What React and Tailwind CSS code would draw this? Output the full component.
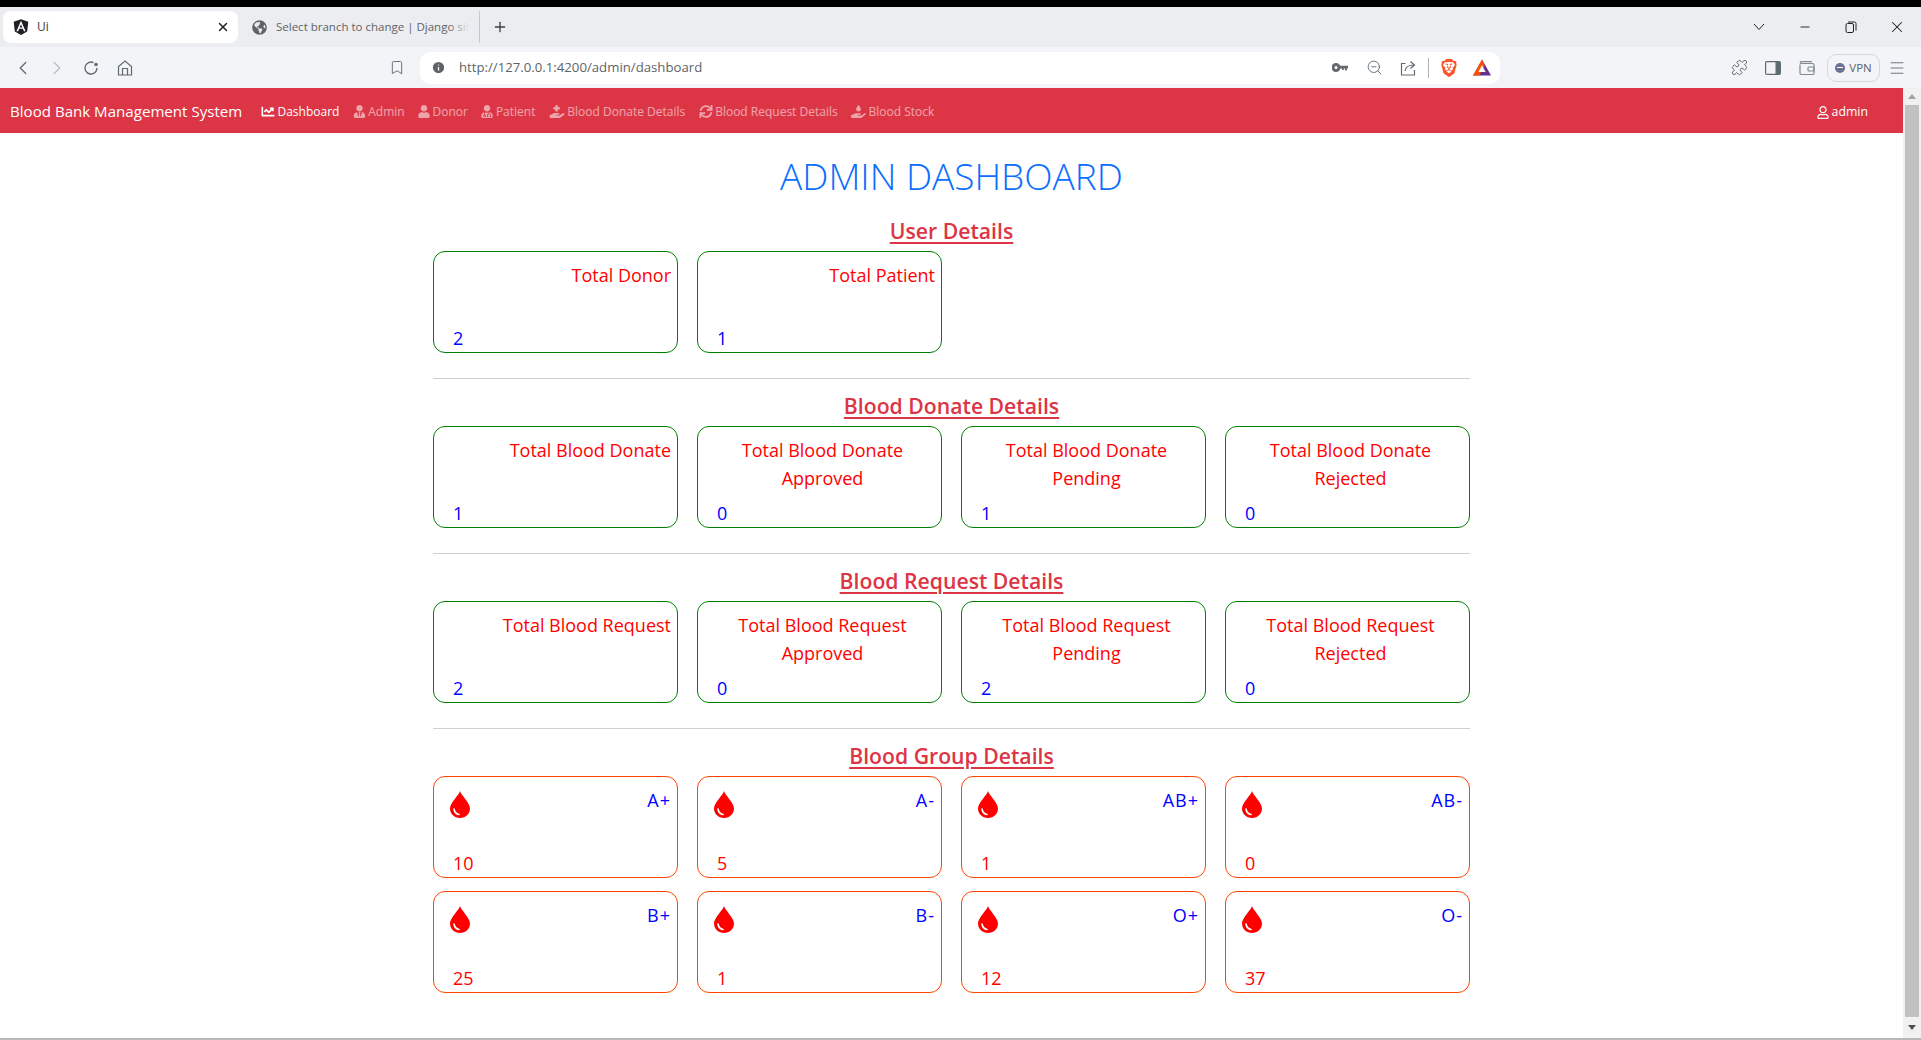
import { Bookmark, ChevronLeft, ChevronRight, Info, Menu, Minus, Plus, Puzzle, X, ZoomOut } from 'lucide-react'
import { FaAngular, FaGlobeAmericas, FaChartLine, FaUserTie, FaUser, FaUserMd, FaHandHoldingMedical, FaSync, FaHandHoldingWater, FaRegUser } from 'react-icons/fa'
import { SiBrave } from 'react-icons/si'

const font = "font-['Open_Sans','Noto_Sans',sans-serif]"

const navItems = [
  { label: 'Dashboard', icon: FaChartLine, size: 'w-[14px]', active: true },
  { label: 'Admin', icon: FaUserTie, size: 'w-[13px]' },
  { label: 'Donor', icon: FaUser, size: 'w-[12px]' },
  { label: 'Patient', icon: FaUserMd, size: 'w-[12px]' },
  { label: 'Blood Donate Details', icon: FaHandHoldingMedical, size: 'w-[16px]' },
  { label: 'Blood Request Details', icon: FaSync, size: 'w-[14px]' },
  { label: 'Blood Stock', icon: FaHandHoldingWater, size: 'w-[15px]' },
]

const sections = [
  {
    title: 'User Details',
    cards: [
      { title: 'Total Donor', value: 2 },
      { title: 'Total Patient', value: 1 },
    ],
  },
  {
    title: 'Blood Donate Details',
    cards: [
      { title: 'Total Blood Donate', value: 1 },
      { title: 'Total Blood Donate Approved', value: 0, center: true },
      { title: 'Total Blood Donate Pending', value: 1, center: true },
      { title: 'Total Blood Donate Rejected', value: 0, center: true },
    ],
  },
  {
    title: 'Blood Request Details',
    cards: [
      { title: 'Total Blood Request', value: 2 },
      { title: 'Total Blood Request Approved', value: 0, center: true },
      { title: 'Total Blood Request Pending', value: 2, center: true },
      { title: 'Total Blood Request Rejected', value: 0, center: true },
    ],
  },
]

const groups = [
  ['A+', 10], ['A-', 5], ['AB+', 1], ['AB-', 0],
  ['B+', 25], ['B-', 1], ['O+', 12], ['O-', 37],
]

function Drop() {
  return (
    <svg viewBox="0 0 20 27" className="w-[20px] h-[27px] fill-[#ff0000]">
      <path d="M10 0C11 4 20 12 20 17.5C20 23 15.5 27 10 27C4.5 27 0 23 0 17.5C0 12 9 4 10 0Z" />
      <path d="M4 18C4.5 21 6.5 23 9 23.5" fill="none" stroke="#fff" strokeWidth="1.6" strokeLinecap="round" />
    </svg>
  )
}

function ToolIcon({ children }) {
  return <div className="w-[34px] h-[34px] flex items-center justify-center text-[#5f6b73]">{children}</div>
}

function Tabs() {
  return (
    <div className="h-[40px] bg-[#ecedf1] flex items-start pt-[4px] pl-[3px] shrink-0">
      <div className="w-[235px] h-[32px] bg-white rounded-[8px] flex items-center pl-[9px] pr-[8px] text-[12px] text-[#3c4043]">
        <FaAngular className="w-[18px] h-[18px] text-[#202124]" />
        <span className="ml-[7px] flex-1">Ui</span>
        <X className="w-[14px] h-[14px] text-[#202124]" strokeWidth={2.5} />
      </div>
      <div className="w-[242px] h-[32px] flex items-center pl-[14px] text-[11.5px] text-[#5f6368] whitespace-nowrap border-r border-[#c4c7cc]">
        <FaGlobeAmericas className="w-[15px] h-[15px] shrink-0" />
        <span className="relative ml-[9px] w-[193px] overflow-hidden">
          Select branch to change | Django site
          <span className="absolute right-0 top-0 bottom-0 w-[20px] bg-gradient-to-r from-transparent to-[#ecedf1]" />
        </span>
      </div>
      <div className="w-[40px] h-[32px] flex items-center justify-center text-[#3c4043]">
        <Plus className="w-[16px] h-[16px]" strokeWidth={2} />
      </div>
      <div className="flex-1" />
      <div className="flex items-center h-[32px] text-[#202124] pr-[1px]">
        <div className="w-[46px] flex justify-center">
          <svg viewBox="0 0 12 8" className="w-[12px] h-[8px] fill-none stroke-current stroke-1"><path d="M1 1L6 6.5L11 1" /></svg>
        </div>
        <div className="w-[46px] flex justify-center"><Minus className="w-[14px] h-[14px]" strokeWidth={1.6} /></div>
        <div className="w-[46px] flex justify-center">
          <svg viewBox="0 0 12 12" className="w-[12px] h-[12px] fill-none stroke-current stroke-1">
            <rect x="1" y="2.5" width="7.5" height="9" rx="1.5" />
            <path d="M3 1H9.5A1.5 1.5 0 0 1 11 2.5V9.5" />
          </svg>
        </div>
        <div className="w-[46px] flex justify-center"><X className="w-[18px] h-[18px]" strokeWidth={1.4} /></div>
      </div>
    </div>
  )
}

function Toolbar() {
  return (
    <div className="h-[41px] bg-[#f3f4f7] flex items-center pl-[6px] shrink-0">
      <ToolIcon><ChevronLeft className="w-[22px] h-[22px]" strokeWidth={1.4} /></ToolIcon>
      <ToolIcon><ChevronRight className="w-[22px] h-[22px] text-[#b4bcc2]" strokeWidth={1.4} /></ToolIcon>
      <ToolIcon>
        <svg viewBox="0 0 16 16" className="w-[16px] h-[16px] fill-none stroke-current stroke-[1.4]">
          <path d="M14 8A6 6 0 1 1 10.5 2.6" />
          <circle cx="13" cy="4.5" r="1.8" className="fill-current stroke-0" />
        </svg>
      </ToolIcon>
      <ToolIcon>
        <svg viewBox="0 0 16 16" className="w-[16px] h-[16px] fill-none stroke-current stroke-[1.2]">
          <path d="M1.5 15H14.5V6.5L8 1L1.5 6.5Z" />
          <path d="M5.5 15V8.5H10.5V15" />
        </svg>
      </ToolIcon>
      <div className="ml-[238px]"><ToolIcon><Bookmark className="w-[16px] h-[17px]" strokeWidth={1.4} /></ToolIcon></div>
      <div className="ml-[6px] w-[1080px] h-[32px] bg-white rounded-[10px] flex items-center">
        <Info className="ml-[11px] w-[15px] h-[15px] fill-[#5f6368] text-white" />
        <span className="ml-[13px] flex-1 text-[13.2px] text-[#5f6368]">http://127.0.0.1:4200/admin/dashboard</span>
        <svg viewBox="0 0 16 9" className="w-[16px] h-[9px] fill-[#666a6e]">
          <path d="M4 0A4.5 4.5 0 1 1 4 9A4.5 4.5 0 0 1 4 0ZM4 3A1.5 1.5 0 1 0 4 6A1.5 1.5 0 0 0 4 3Z" fillRule="evenodd" />
          <path d="M7.5 2.8H16V5.5H14.8V7.5H13V5.5H11.8V7H10V5.5H7.5Z" />
        </svg>
        <ZoomOut className="ml-[18px] w-[17px] h-[17px] text-[#5f6b73]" strokeWidth={1.3} />
        <svg viewBox="0 0 16 16" className="ml-[17px] w-[16px] h-[16px] fill-none stroke-[#5f6b73] stroke-[1.2]">
          <path d="M5.5 3.5H1.5V15H14.5V10" />
          <path d="M5 11C5.5 7.5 8.5 5 13.5 5M10.5 1.5L14.5 5L10.5 8.5" />
        </svg>
        <div className="ml-[12px] w-px h-[20px] bg-[#aeb1b5]" />
        <SiBrave className="ml-[11px] w-[18px] h-[20px] text-[#fb542b]" />
        <svg viewBox="0 0 20 18" className="ml-[15px] mr-[9px] w-[18px] h-[17px]">
          <path d="M10 0L20 18H0Z" fill="#662d91" />
          <path d="M10 0L3.5 12L0 18H7L10 12L13 7Z" fill="#ff5000" />
          <path d="M10 6.5L14 14H6Z" fill="#fff" />
        </svg>
      </div>
      <div className="ml-[222px]"><ToolIcon><Puzzle className="w-[17px] h-[17px]" strokeWidth={1.4} /></ToolIcon></div>
      <ToolIcon>
        <svg viewBox="0 0 16 14" className="w-[16px] h-[14px]">
          <rect x="0.6" y="0.6" width="14.8" height="12.8" rx="1.5" className="fill-none stroke-[#5f6b73] stroke-[1.2]" />
          <rect x="10.5" y="0.6" width="4.9" height="12.8" className="fill-[#5f6b73]" />
        </svg>
      </ToolIcon>
      <ToolIcon>
        <svg viewBox="0 0 16 14" className="w-[16px] h-[14px] fill-none stroke-[#7f8a92] stroke-[1.2]">
          <path d="M1 3.5V12A1.5 1.5 0 0 0 2.5 13.5H13.5A1.5 1.5 0 0 0 15 12V4A1.5 1.5 0 0 0 13.5 2.5H2A1 1 0 0 1 2 0.6H13" />
          <rect x="9" y="6" width="6" height="4" rx="1" />
        </svg>
      </ToolIcon>
      <div className="ml-[3px] w-[53px] h-[28px] border border-[#d5d9de] rounded-[9px] flex items-center justify-center gap-[4px] text-[#5f6368] text-[11.5px]">
        <span className="w-[10px] h-[10px] rounded-full bg-[#6b7190] flex items-center justify-center">
          <span className="w-[6px] h-[1.5px] bg-white" />
        </span>
        VPN
      </div>
      <ToolIcon><Menu className="w-[18px] h-[18px]" strokeWidth={1.2} /></ToolIcon>
    </div>
  )
}

function Navbar() {
  return (
    <nav className="h-[45px] bg-[#dc3545] flex items-center pl-[10px] shrink-0">
      <a className="pt-[1px] text-[15.1px] text-white whitespace-nowrap mr-[12px]">Blood Bank Management System</a>
      {navItems.map((item) => (
        <a
          key={item.label}
          className={`flex items-center gap-[2.5px] pt-[2px] px-[6.7px] text-[12px] whitespace-nowrap ${item.active ? 'text-white' : 'text-white/55'}`}
        >
          <item.icon className={`${item.size} h-[13px]`} />
          {item.label}
        </a>
      ))}
      <a className="ml-auto mr-[35px] flex items-center gap-[3px] pt-[3px] text-[12.3px] text-white">
        <FaRegUser className="w-[12px] h-[13px]" />
        admin
      </a>
    </nav>
  )
}

function StatCard({ title, value, center }) {
  return (
    <div className="h-[102px] rounded-[12px] border border-[#008000] flex flex-col justify-between">
      <div className={`pt-[9px] text-[18px] leading-[28px] text-[#ff0000] ${center ? 'pl-[12px] pr-[6px] text-center' : 'pl-[16px] pr-[6px] text-right'}`}>
        {title}
      </div>
      <div className="pl-[19px] text-[18px] leading-[28px] text-[#0000ff]">{value}</div>
    </div>
  )
}

function GroupCard({ name, value }) {
  return (
    <div className="h-[102px] rounded-[12px] border border-[#ff4500] flex flex-col justify-between">
      <div className="flex justify-between items-start pl-[16px] pr-[6px]">
        <div className="pt-[14px]"><Drop /></div>
        <div className="pt-[9px] text-[18px] leading-[28px] tracking-[1px] text-[#0000ff]">{name}</div>
      </div>
      <div className="pl-[19px] text-[18px] leading-[28px] text-[#ff0000]">{value}</div>
    </div>
  )
}

function SectionTitle({ children }) {
  return (
    <h2 className="h-[28px] mb-[6px] text-center text-[21.2px] leading-[28px] font-semibold text-[#dc3545] underline decoration-2 underline-offset-[3px]">
      {children}
    </h2>
  )
}

function Scrollbar() {
  return (
    <div className="w-[18px] bg-[#f1f1f1] flex flex-col items-center shrink-0">
      <div className="h-[17px] flex items-center justify-center">
        <div className="border-x-[4px] border-x-transparent border-b-[5px] border-b-[#a3a3a3]" />
      </div>
      <div className="w-[14px] h-[912px] bg-[#c1c1c1]" />
      <div className="flex-1 flex items-center justify-center">
        <div className="border-x-[4px] border-x-transparent border-t-[5px] border-t-[#505050]" />
      </div>
    </div>
  )
}

export default function App() {
  return (
    <div className={`h-screen flex flex-col overflow-hidden bg-white ${font}`}>
      <div className="h-[7px] bg-black shrink-0" />
      <Tabs />
      <Toolbar />
      <div className="flex-1 flex min-h-0">
        <div className="flex-1 flex flex-col min-w-0">
          <Navbar />
          <main className="w-[1037px] mx-auto">
            <h1 className="mt-[19px] mb-[17px] h-[48px] text-center text-[37px] leading-[48px] font-light text-[#0d6efd]">
              ADMIN DASHBOARD
            </h1>
            {sections.map((section) => (
              <section key={section.title}>
                <SectionTitle>{section.title}</SectionTitle>
                <div className="grid grid-cols-4 gap-[19px]">
                  {section.cards.map((card) => (
                    <StatCard key={card.title} {...card} />
                  ))}
                </div>
                <hr className="mt-[25px] mb-[13px] border-[#cfcfcf]" />
              </section>
            ))}
            <SectionTitle>Blood Group Details</SectionTitle>
            <div className="grid grid-cols-4 gap-x-[19px] gap-y-[13px]">
              {groups.map(([name, value]) => (
                <GroupCard key={name} name={name} value={value} />
              ))}
            </div>
          </main>
        </div>
        <Scrollbar />
      </div>
      <div className="h-[2px] bg-[#b8b8b8] shrink-0" />
    </div>
  )
}
